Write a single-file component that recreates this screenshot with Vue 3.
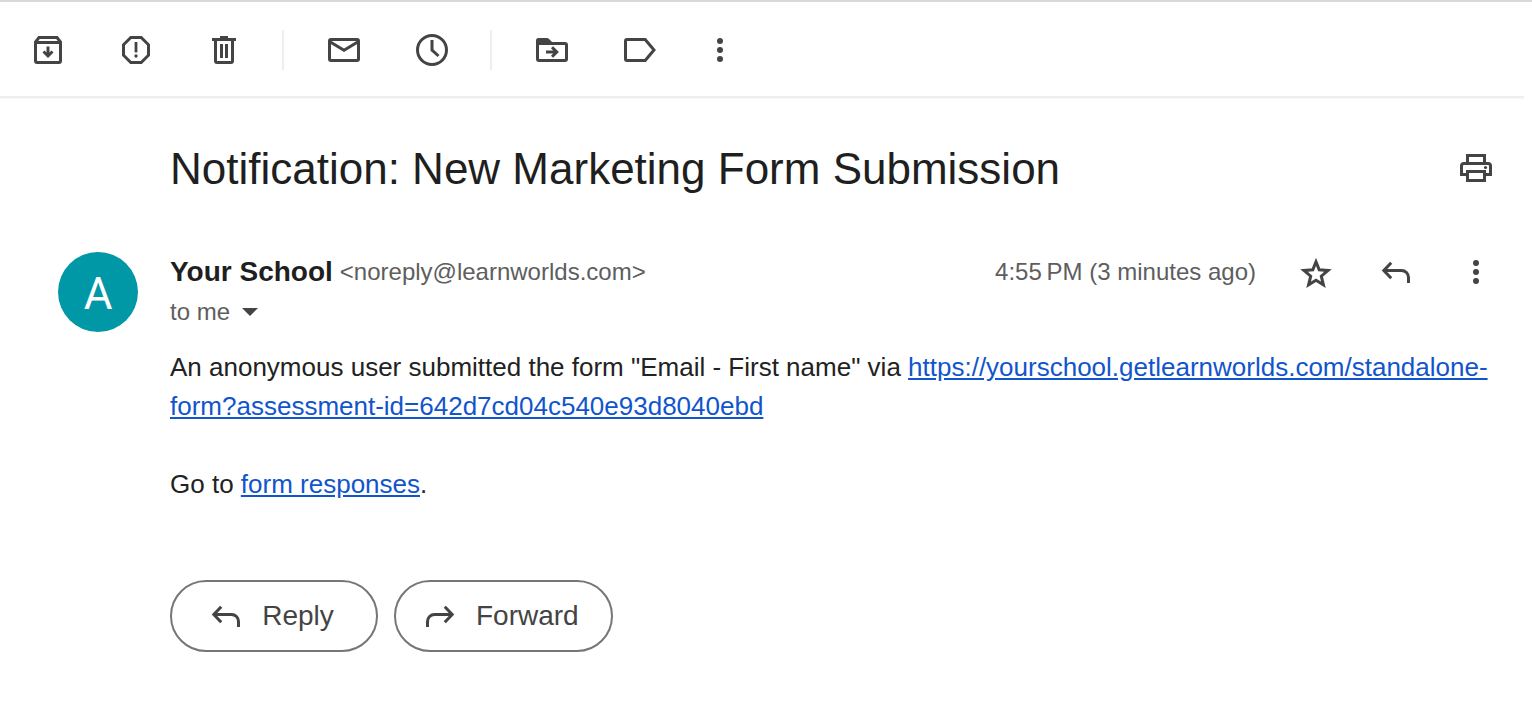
<script setup>
const dots = [11, 20, 29]
</script>

<template>
  <div class="mail">
    <header class="toolbar" role="toolbar" aria-label="Message actions">
      <div class="group">
        <button class="icon-btn" type="button" aria-label="Archive">
          <svg class="icon" viewBox="0 0 40 40">
            <path class="line" d="M7.500 12v19a1.500 1.500 0 0 0 1.500 1.500h22a1.500 1.500 0 0 0 1.500-1.500V12L29 7.500H11zM7.500 12.500h25" />
            <path class="line" d="M20 16.500v9M15.500 21.500l4.500 4.500 4.500-4.500" />
          </svg>
        </button>
        <button class="icon-btn" type="button" aria-label="Report spam">
          <svg class="icon" viewBox="0 0 40 40">
            <path class="line" d="M14.800 7.500h10.400l7.300 7.300v10.400l-7.300 7.300H14.800l-7.300-7.300V14.800z" />
            <path class="fill" d="M18.600 12h2.800v10.400h-2.800z" />
            <circle class="fill" cx="20" cy="26" r="1.700" />
          </svg>
        </button>
        <button class="icon-btn" type="button" aria-label="Delete">
          <svg class="icon" viewBox="0 0 40 40">
            <path class="fill" d="M16 6h8v2h8v3H8V8h8z" />
            <path class="line" d="M11.500 10v21a1.500 1.500 0 0 0 1.500 1.500h14a1.500 1.500 0 0 0 1.500-1.500V10" />
            <path class="fill" d="M16 14h3v14h-3zM21 14h3v14h-3z" />
          </svg>
        </button>
      </div>
      <span class="divider"></span>
      <div class="group">
        <button class="icon-btn" type="button" aria-label="Mark as unread">
          <svg class="icon" viewBox="0 0 40 40">
            <rect class="line" x="5.500" y="9.500" width="29" height="21" rx="1.500" />
            <path class="line" d="M5.500 11.500L20 20.200l14.500-8.700" />
          </svg>
        </button>
        <button class="icon-btn" type="button" aria-label="Snooze">
          <svg class="icon" viewBox="0 0 40 40">
            <circle class="line" cx="20" cy="20" r="14.500" />
            <path class="line" d="M20 10v10l6.500 6" />
          </svg>
        </button>
      </div>
      <span class="divider"></span>
      <div class="group">
        <button class="icon-btn" type="button" aria-label="Move to">
          <svg class="icon" viewBox="0 0 40 40">
            <path class="line" d="M5.500 11v18a1.500 1.500 0 0 0 1.500 1.500h26a1.500 1.500 0 0 0 1.500-1.500V15a1.500 1.500 0 0 0-1.500-1.500H6" />
            <path class="fill" d="M6.500 8H15q1 0 1.800.800L20.500 12.500l-1 2.500H4V10.500Q4 8 6.500 8z" />
            <path class="line" d="M14 22h10.500M20 17.200L24.800 22 20 26.800" />
          </svg>
        </button>
        <button class="icon-btn" type="button" aria-label="Labels">
          <svg class="icon" viewBox="0 0 40 40">
            <path class="line" d="M7 9.500h18.200L34 20l-8.800 10.500H7a1.500 1.500 0 0 1-1.500-1.500V11A1.500 1.500 0 0 1 7 9.500z" />
          </svg>
        </button>
      </div>
      <button class="icon-btn overflow" type="button" aria-label="More">
        <svg class="icon" viewBox="0 0 40 40">
          <circle v-for="y in dots" :key="y" class="fill" cx="20" :cy="y" r="3" />
        </svg>
      </button>
    </header>

    <main class="message">
      <div class="subject-row">
        <h1 class="subject">Notification: New Marketing Form Submission</h1>
        <button class="icon-btn" type="button" aria-label="Print">
          <svg class="icon" viewBox="0 0 40 40">
            <path class="line" d="M11.500 15V7.500h17V15" />
            <path class="line" d="M11.500 26.500h-6V18A2.500 2.500 0 0 1 8 15.500h24a2.500 2.500 0 0 1 2.500 2.500v8.500h-6" />
            <path class="line" d="M11.500 23.500h17v9h-17z" />
            <circle class="fill" cx="29.500" cy="19.500" r="1.600" />
          </svg>
        </button>
      </div>

      <div class="sender-row">
        <div class="avatar" aria-hidden="true">A</div>
        <div class="sender">
          <div class="from">
            <span class="name">Your School</span>
            <span class="address">&lt;noreply@learnworlds.com&gt;</span>
          </div>
          <button class="recipient" type="button">
            to me
            <svg class="caret" viewBox="0 0 16 8"><path class="fill" d="M0 0h16L8 8z" /></svg>
          </button>
        </div>
        <div class="meta">
          <time class="time">4:55&#8239;PM (3 minutes ago)</time>
          <button class="icon-btn" type="button" aria-label="Star">
            <svg class="icon" viewBox="0 0 40 40">
              <path class="line" d="M20 9.800l3.200 8 8.800.700-6.700 5.700 2.100 8.600L20 28.300l-7.400 4.500 2.100-8.600L8 18.500l8.800-.700z" />
            </svg>
          </button>
          <button class="icon-btn" type="button" aria-label="Reply">
            <svg class="icon" viewBox="0 0 40 40">
              <path class="line" d="M15.200 10.800l-7.400 7.700 7.400 7.700M8 18.500h17.500a7 7 0 0 1 7 7V31" />
            </svg>
          </button>
          <button class="icon-btn" type="button" aria-label="More options">
            <svg class="icon" viewBox="0 0 40 40">
              <circle v-for="y in dots" :key="y" class="fill" cx="20" :cy="y" r="3" />
            </svg>
          </button>
        </div>
      </div>

      <div class="content">
        <p class="text">An anonymous user submitted the form "Email - First name" via <a class="link" href="#form">https://yourschool.getlearnworlds.com/standalone-form?assessment-id=642d7cd04c540e93d8040ebd</a></p>
        <p class="text">Go to <a class="link" href="#responses">form responses</a>.</p>
      </div>

      <div class="actions">
        <button class="pill" type="button">
          <svg class="icon" viewBox="0 0 40 40">
            <path class="line" d="M15.200 10.800l-7.400 7.700 7.400 7.700M8 18.500h17.500a7 7 0 0 1 7 7V31" />
          </svg>
          Reply
        </button>
        <button class="pill" type="button">
          <svg class="icon" viewBox="0 0 40 40">
            <path class="line" d="M24.800 10.800l7.400 7.700-7.400 7.700M32 18.500H14.500a7 7 0 0 0-7 7V31" />
          </svg>
          Forward
        </button>
      </div>
    </main>
  </div>
</template>

<style>
body {
  background: #fff;
}
</style>

<style scoped>
.mail {
  border-top: 2px solid #d9d9d9;
  color: #1f1f1f;
  font-family: "Liberation Sans", Arial, sans-serif;
}
button {
  margin: 0;
  padding: 0;
  border: 0;
  background: none;
  color: inherit;
  font: inherit;
  cursor: pointer;
}
.icon {
  display: block;
  flex: none;
  width: 40px;
  height: 40px;
}
.line {
  fill: none;
  stroke: #444;
  stroke-width: 3;
}
.fill {
  fill: #444;
}
.icon-btn {
  flex: none;
}
.toolbar {
  display: flex;
  align-items: center;
  margin-right: 8px;
  padding: 28px 0 26px 28px;
  border-bottom: 2px solid #eee;
  box-shadow: 0 1px 1px #f8f8f8;
}
.group {
  display: flex;
  gap: 48px;
}
.divider {
  width: 2px;
  height: 40px;
  margin: 0 40px 0 38px;
  background: #eee;
}
.overflow {
  margin-left: 40px;
}
.message {
  padding: 38px 36px 68px 170px;
}
.subject-row {
  display: flex;
  align-items: center;
  justify-content: space-between;
}
.subject {
  margin: 0;
  padding-top: 2px;
  font-size: 44px;
  font-weight: 400;
  line-height: 62px;
}
.sender-row {
  display: flex;
  align-items: flex-start;
  margin: 52px 0 0 -112px;
}
.avatar {
  flex: none;
  box-sizing: border-box;
  width: 80px;
  height: 80px;
  margin-right: 32px;
  padding-top: 2px;
  border-radius: 50%;
  background: #0097a7;
  color: #fff;
  font-family: Roboto, sans-serif;
  font-size: 44px;
  line-height: 80px;
  text-align: center;
}
.sender {
  flex: 1;
}
.from {
  display: flex;
  align-items: center;
  gap: 7px;
  line-height: 40px;
}
.name {
  font-size: 28px;
  font-weight: 700;
}
.address,
.recipient,
.time {
  color: #5e5e5e;
  font-size: 24px;
}
.recipient {
  display: flex;
  align-items: center;
  gap: 12px;
  line-height: 40px;
}
.caret {
  width: 16px;
  height: 8px;
}
.meta {
  display: flex;
  align-items: center;
  gap: 40px;
}
.time {
  line-height: 40px;
}
.content {
  padding-top: 16px;
}
.text {
  margin: 0 0 39px;
  color: #222;
  font-size: 26px;
  line-height: 39px;
}
.link {
  color: #15c;
}
.actions {
  display: flex;
  gap: 16px;
  margin-top: 76px;
}
.pill {
  display: flex;
  align-items: center;
  justify-content: center;
  gap: 16px;
  min-width: 208px;
  height: 72px;
  padding: 0 32px 0 24px;
  border: 2px solid #747775;
  border-radius: 36px;
  color: #444;
  font-size: 28px;
}
</style>
